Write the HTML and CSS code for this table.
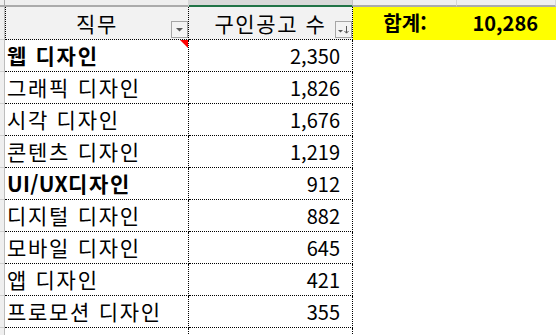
FILE: index.html
```html
<!DOCTYPE html>
<html lang="ko">
<head>
<meta charset="utf-8">
<link rel="stylesheet" href="styles.css">
</head>
<body>
<div class="sheet">
  <div class="ch corner"></div>
  <div class="ch"></div>
  <div class="ch sel"></div>
  <div class="ch"></div>
  <div class="ch"></div>

  <div class="g"></div>
  <div class="c a hd">직무
    <span class="fbtn"><svg width="15" height="15" viewBox="0 0 15 15"><path d="M4 6h7l-3.5 3.5z" fill="#595959"/></svg></span>
  </div>
  <div class="c b hd">구인공고 수
    <span class="fbtn"><svg width="15" height="15" viewBox="0 0 15 15"><path d="M2 8h5l-2.5 2.5z" fill="#595959"/><path d="M10.5 4v7M8.5 9l2 2.2 2-2.2" stroke="#595959" stroke-width="1" fill="none"/></svg></span>
  </div>
  <div class="tot"><span class="l">합계:</span><span class="r">10,286</span></div>

  <div class="g"></div><div class="c a bold">웹 디자인<span class="note"></span></div><div class="c b">2,350</div><div class="e"></div>
  <div class="g"></div><div class="c a">그래픽 디자인</div><div class="c b">1,826</div><div class="e"></div>
  <div class="g"></div><div class="c a">시각 디자인</div><div class="c b">1,676</div><div class="e"></div>
  <div class="g"></div><div class="c a">콘텐츠 디자인</div><div class="c b">1,219</div><div class="e"></div>
  <div class="g"></div><div class="c a bold"><span class="latin">UI/UX</span>디자인</div><div class="c b">912</div><div class="e"></div>
  <div class="g"></div><div class="c a">디지털 디자인</div><div class="c b">882</div><div class="e"></div>
  <div class="g"></div><div class="c a">모바일 디자인</div><div class="c b">645</div><div class="e"></div>
  <div class="g"></div><div class="c a">앱 디자인</div><div class="c b">421</div><div class="e"></div>
  <div class="g"></div><div class="c a">프로모션 디자인</div><div class="c b">355</div><div class="e"></div>
  <div class="g"></div><div class="c a"></div><div class="c b"></div><div class="e"></div>
</div>
</body>
</html>
```

FILE: styles.css
```css
html, body {
  margin: 0;
  padding: 0;
  background: #fff;
}
body {
  font-family: "Noto Sans CJK KR", "Noto Sans", sans-serif;
  color: #000;
}
.sheet {
  display: grid;
  grid-template-columns: 5px 184px 164px 104px 99px;
  grid-template-rows: 7px 33px repeat(10, 32px);
  height: 335px;
  overflow: hidden;
}
.ch {
  box-sizing: border-box;
  background: #efefef;
  border-bottom: 2px solid #ababab;
  border-right: 1px solid #d6d6d6;
}
.ch.corner {
  border-right-color: #ababab;
}
.ch.sel {
  background: #d9d9d9;
  border-bottom-color: #217346;
  border-right-color: #c4c4c4;
}
.g {
  box-sizing: border-box;
  background: #efefef;
  border-right: 1px solid #bdbdbd;
  border-bottom: 1px solid #d0d0d0;
}
.c {
  box-sizing: border-box;
  position: relative;
  border-right: 1px dotted #000;
  border-bottom: 1px dotted #000;
  font-size: 21px;
  line-height: 31px;
  white-space: nowrap;
}
.a {
  padding-left: 2px;
  letter-spacing: 1.7px;
}
.latin {
  letter-spacing: 0.3px;
}
.b {
  text-align: right;
  padding-right: 12px;
  font-size: 20px;
}
.bold {
  font-weight: 700;
}
.hd {
  background: #f2f2f2;
  text-align: center;
  line-height: 32px;
  font-size: 21px;
  padding: 0;
  letter-spacing: 1.6px;
}
.hd.a {
  border-left: 1px dotted #000;
}
.fbtn {
  position: absolute;
  right: 0;
  bottom: 1px;
  width: 17px;
  height: 17px;
  box-sizing: border-box;
  border: 1px solid #a6a6a6;
  background: #f3f3f3;
  display: flex;
}
.tot {
  grid-column: span 2;
  background: #ffff00;
  display: grid;
  grid-template-columns: 104px 99px;
  font-size: 20px;
  font-weight: 700;
  line-height: 32px;
  white-space: nowrap;
}
.tot .l {
  text-align: center;
}
.tot .r {
  text-align: right;
  padding-right: 18px;
}
.e {
  grid-column: span 2;
}
.note {
  position: absolute;
  top: 0;
  right: 0;
  width: 0;
  height: 0;
  border-top: 8px solid #ff0000;
  border-left: 8px solid transparent;
}
```
